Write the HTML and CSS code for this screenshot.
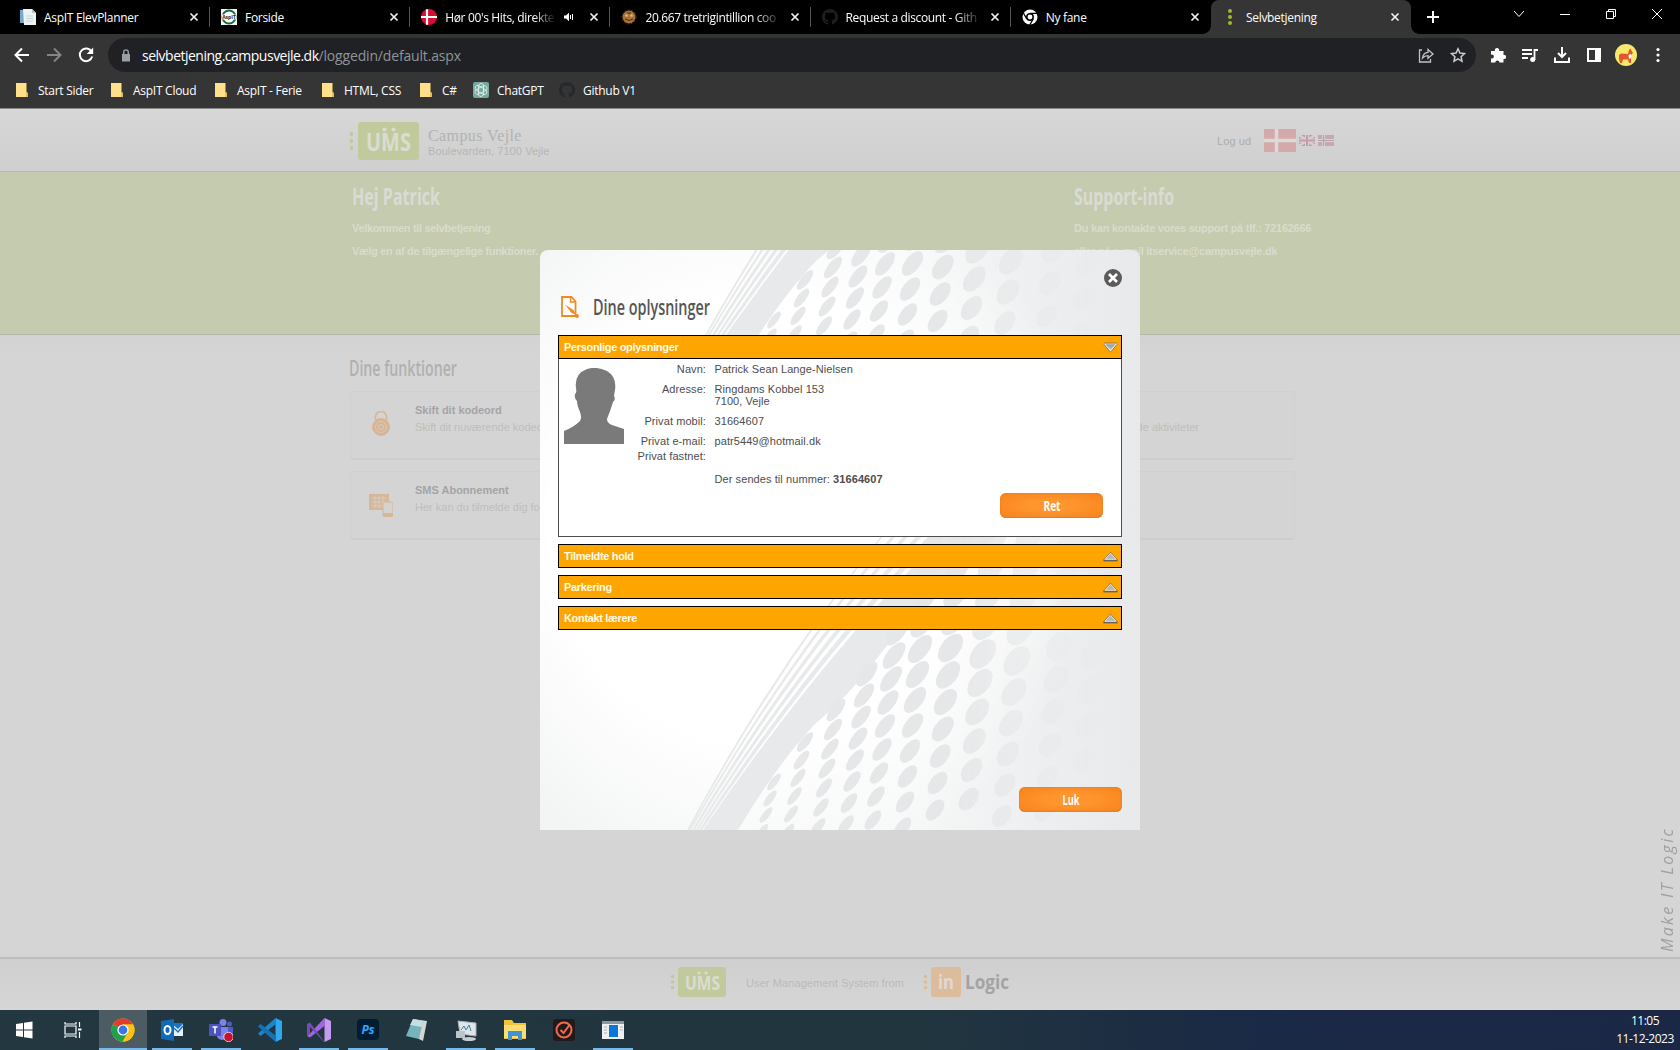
FILE: index.html
```html
<!DOCTYPE html>
<html lang="da">
<head>
<meta charset="utf-8">
<title>Selvbetjening</title>
<link rel="stylesheet" href="styles.css">
</head>
<body>
<svg class="defs" width="0" height="0">
  <defs>
    <symbol id="x" viewBox="0 0 10 10"><path d="M1.5 1.5l7 7M8.500 1.500l-7 7" stroke="#f1f1f1" stroke-width="1.700" fill="none"/></symbol>
    <symbol id="folder" viewBox="0 0 12 14"><path d="M0 0h10.500v9L12 10v4H0z" fill="#ffe08a"/><path d="M10 9l2 1v4h-2z" fill="#e9bd55"/></symbol>
    <symbol id="github" viewBox="0 0 16 16"><path d="M8 0C3.580 0 0 3.580 0 8c0 3.540 2.290 6.530 5.470 7.590.4.070.55-.17.55-.38v-1.490c-2.010.37-2.690-.94-2.690-.94-.36-.92-.88-1.200-.88-1.200-.72-.5.060-.48.060-.48.8.060 1.220.83 1.220.83.7 1.210 1.870.87 2.330.66.070-.52.280-.87.5-1.070-1.780-.2-3.640-.89-3.640-3.950 0-.87.310-1.590.82-2.150-.08-.2-.36-1.020.080-2.120 0 0 .67-.21 2.200.82a7.600 7.600 0 0 1 4 0c1.530-1.040 2.200-.82 2.200-.82.440 1.100.160 1.920.080 2.120.510.56.82 1.270.82 2.150 0 3.070-1.870 3.750-3.650 3.950.290.25.540.73.540 1.480v2.200c0 .21.150.46.550.38A8 8 0 0 0 8 0z"/></symbol>
    <symbol id="dots" viewBox="0 0 6 20"><circle cx="3" cy="3" r="2.200"/><circle cx="3" cy="10" r="2.200"/><circle cx="3" cy="17" r="2.200"/></symbol>
    <linearGradient id="arrow" x1="0" y1="0" x2="0" y2="1"><stop offset="0" stop-color="#8a93a0"/><stop offset="1" stop-color="#d9d9d9"/></linearGradient>
    <symbol id="up" viewBox="0 0 16 11"><path d="M8 1.500L14.500 8.500H1.500z" fill="#b2b9be"/><path d="M.5 9.300L8 1l7.500 8.300z" stroke="#75695a" stroke-width=".8" fill="none"/><path d="M2 8.500L8 2l6 6.500z" stroke="#f4f1e8" stroke-width=".8" fill="none"/><path d="M.5 10h15" stroke="#5f5f5f" stroke-width="1.400"/></symbol>
    <symbol id="down" viewBox="0 0 16 11"><path d="M1.500 1.500h13L8 9.500z" fill="url(#arrow)" stroke="#fff" stroke-width="1.200"/><path d="M.5 .8h15M1 2l7 8.500L15 2" stroke="#70675a" stroke-width=".9" fill="none"/></symbol>
  </defs>
</svg>

<header class="chrome">
  <div class="tabs">
    <div class="tab"><svg class="fav" viewBox="0 0 16 16"><path d="M0 1h9v13H0z" fill="#74a9cf"/><path d="M3 0h9l4 4v12H4z" fill="#eef2f3"/><path d="M12 0v4h4" fill="#b9c4c9"/><path d="M6 7h7M6 9.500h7M6 12h7" stroke="#c8d0d4"/></svg><span class="label">AspIT ElevPlanner</span><svg class="close"><use href="#x"/></svg></div>
    <div class="tab"><svg class="fav" viewBox="0 0 16 16"><path d="M0 0h16v16H0z" fill="#f3f6f4"/><circle cx="8" cy="8" r="6.500" fill="#fff" stroke="#176b43" stroke-width="2"/><path d="M1 5.500h14v5H1z" fill="#fff"/><text x="8" y="9.700" font-size="5" font-weight="700" text-anchor="middle" fill="#222">AspIT</text></svg><span class="label">Forside</span><svg class="close"><use href="#x"/></svg></div>
    <div class="tab"><svg class="fav" viewBox="0 0 16 16"><circle cx="8" cy="8" r="8" fill="#d80c35"/><path d="M6 .3v15.400M0 8h16" stroke="#fff" stroke-width="2.200"/></svg><span class="label fade">Hør 00's Hits, direkte</span><svg class="audio" viewBox="0 0 10 10"><path d="M0 3.500h2L5 .8v8.400L2 6.500H0z" fill="#fff"/><path d="M6.500 3v4M8.500 2v6" stroke="#fff" stroke-width="1"/></svg><svg class="close"><use href="#x"/></svg></div>
    <div class="tab"><svg class="fav" viewBox="0 0 16 16"><circle cx="8" cy="8" r="6.500" fill="#a8743d"/><circle cx="8" cy="8" r="7" fill="none" stroke="#5b3a1c" stroke-dasharray="2 1.500"/><circle cx="5.500" cy="6.500" r="1.300" fill="#e4b778"/><circle cx="10.500" cy="6.500" r="1.300" fill="#e4b778"/><path d="M4 10q4 3 8 0M6 4h4" stroke="#4b2c12" fill="none"/></svg><span class="label fade">20.667 tretrigintillion coo</span><svg class="close"><use href="#x"/></svg></div>
    <div class="tab"><svg class="fav dim"><use href="#github"/></svg><span class="label fade">Request a discount - Gith</span><svg class="close"><use href="#x"/></svg></div>
    <div class="tab last"><svg class="fav" viewBox="0 0 16 16"><circle cx="8" cy="8" r="7.500" fill="#fff"/><circle cx="8" cy="8" r="3.200" fill="#fff" stroke="#000" stroke-width="1.500"/><path d="M8 4.300h7M4.800 10L1.400 4M11.200 10l-3.500 6" stroke="#000" stroke-width="1.300"/></svg><span class="label">Ny fane</span><svg class="close"><use href="#x"/></svg></div>
    <div class="tab active"><svg class="fav" viewBox="0 0 16 16"><g fill="#9bbb2f"><circle cx="8" cy="2" r="2"/><circle cx="8" cy="8" r="2"/><circle cx="8" cy="14" r="2"/></g></svg><span class="label">Selvbetjening</span><svg class="close"><use href="#x"/></svg></div>
    <svg class="plus" viewBox="0 0 12 12"><path d="M6 0v12M0 6h12" stroke="#fff" stroke-width="2"/></svg>
    <div class="win">
      <svg viewBox="0 0 10 10"><path d="M0 2l5 5.500L10 2" /></svg>
      <svg viewBox="0 0 10 10"><path d="M0 5.500h10"/></svg>
      <svg viewBox="0 0 10 10"><path d="M.5 2.500h7v7h-7zM2.500 2.500v-2h7v7h-2"/></svg>
      <svg viewBox="0 0 10 10"><path d="M0 0l10 10M10 0L0 10"/></svg>
    </div>
  </div>
  <div class="toolbar">
    <svg class="nav" viewBox="0 0 16 16"><path d="M15 8H2M8 1.500L1.500 8 8 14.500" stroke="#fff" stroke-width="2" fill="none"/></svg>
    <svg class="nav" viewBox="0 0 16 16"><path d="M1 8h13M8 1.500L14.500 8 8 14.500" stroke="#858585" stroke-width="2" fill="none"/></svg>
    <svg class="nav" viewBox="0 0 16 16"><path d="M13.500 4.500A6.300 6.300 0 1 0 14.200 9.500" stroke="#fff" stroke-width="2" fill="none"/><path d="M15.200.5v6.500H8.700z" fill="#fff"/></svg>
    <div class="url">
      <svg class="lock" viewBox="0 0 10 13"><path d="M1 5h8v7.500H1z" fill="#9aa0a6"/><path d="M2.700 5V3.200a2.300 2.300 0 0 1 4.600 0V5" stroke="#9aa0a6" stroke-width="1.400" fill="none"/></svg>
      <span class="host">selvbetjening.campusvejle.dk</span><span class="path">/loggedin/default.aspx</span>
      <svg class="uicon share" viewBox="0 0 16 16" fill="none" stroke="#bfc3c7" stroke-width="1.300"><path d="M4 3H1.500v12h11v-3"/><path d="M4.500 11c.5-4 2.500-5.500 5.500-5.700V2.500l5 4.500-5 4.300V8.700C7.500 8.700 6 9.200 4.500 11z"/></svg>
      <svg class="uicon" viewBox="0 0 16 16" fill="none" stroke="#c8ccd0" stroke-width="1.500"><path d="M8 1.800l1.900 4.300 4.600.5-3.400 3.100.9 4.600L8 11.900l-4 2.400.9-4.600L1.500 6.600l4.600-.5z"/></svg>
    </div>
    <div class="actions">
      <svg viewBox="0 0 16 16"><path fill="#fff" d="M1 4h4a2.200 2.200 0 1 1 4 0h4.500v4a2.100 2.100 0 1 1 0 4v3.500H9.500a2.100 2.100 0 1 0-4.200 0H1v-4.200a2 2 0 1 0 0-3.600z"/></svg>
      <svg viewBox="0 0 16 16"><path d="M0 3h10M0 7h10M0 11h6M12.500 13V3h3.500" stroke="#fff" stroke-width="1.800" fill="none"/><circle cx="10.700" cy="12.500" r="2.500" fill="#fff"/></svg>
      <svg viewBox="0 0 16 16"><path d="M8 0v9M4 6l4 4 4-4M1 10.500V15h14v-4.500" stroke="#fff" stroke-width="2" fill="none"/></svg>
      <svg viewBox="0 0 16 16"><path d="M2 2h12v12H2z" fill="none" stroke="#fff" stroke-width="2"/><path d="M9 2h5v12H9z" fill="#fff"/></svg>
      <svg class="avatar" viewBox="0 0 22 22"><circle cx="11" cy="11" r="11" fill="#f7e96b"/><path d="M4 11l2-1.500 7 .5 1-4 1.500-1.500L16 6l2 3-2 2v8h-2l-1-3.500H8L7 19H5l-1-4z" fill="#e4572e"/><path d="M13.500 11l2.500-1v4l-2 1z" fill="#fff"/></svg>
      <svg viewBox="0 0 16 16" fill="#fff"><circle cx="8" cy="2.500" r="1.600"/><circle cx="8" cy="8" r="1.600"/><circle cx="8" cy="13.500" r="1.600"/></svg>
    </div>
  </div>
  <nav class="bookmarks">
    <a class="b1"><svg><use href="#folder"/></svg><span>Start Sider</span></a>
    <a class="b2"><svg><use href="#folder"/></svg><span>AspIT Cloud</span></a>
    <a class="b3"><svg><use href="#folder"/></svg><span>AspIT - Ferie</span></a>
    <a class="b4"><svg><use href="#folder"/></svg><span>HTML, CSS</span></a>
    <a class="b5"><svg><use href="#folder"/></svg><span>C#</span></a>
    <a class="b6"><svg class="wide" viewBox="0 0 16 16"><rect width="16" height="16" rx="2" fill="#74a99c"/><g fill="none" stroke="#e8f4f1" stroke-width=".8"><path id="petal" d="M8 5.200l2.500-1.400a2.600 2.600 0 0 1 3 4L8 11"/><use href="#petal" transform="rotate(60 8 8)"/><use href="#petal" transform="rotate(120 8 8)"/><use href="#petal" transform="rotate(180 8 8)"/><use href="#petal" transform="rotate(240 8 8)"/><use href="#petal" transform="rotate(300 8 8)"/></g></svg><span>ChatGPT</span></a>
    <a class="b7"><svg class="wide gh"><use href="#github"/></svg><span>Github V1</span></a>
  </nav>
</header>

<main class="page">
  <div class="masthead">
    <svg class="logo" width="70" height="38" viewBox="0 0 70 38"><g fill="#c1ca9d"><use href="#dots" x="-2" y="9" width="6" height="20"/><rect x="8" width="61" height="38" rx="3"/></g><text class="cond" x="16" y="28.500" font-size="25" textLength="45" lengthAdjust="spacingAndGlyphs" fill="#dadcd1">UMS</text><g fill="#dadcd1"><circle cx="34.500" cy="7.500" r="2"/><circle cx="43.500" cy="7.500" r="2"/></g></svg>
    <div class="school"><div class="name">Campus Vejle</div><div class="addr">Boulevarden, 7100 Vejle</div></div>
    <span class="logout">Log ud</span>
    <svg class="flags" width="72" height="24" viewBox="0 0 72 24"><path d="M0 0h32v23H0z" fill="#d4a9aa"/><path d="M12.500 0v23M0 11.500h32" stroke="#dadada" stroke-width="3.500"/><path d="M35 6h16v11H35z" fill="#a7a8b6"/><path d="M35 6l16 11M51 6L35 17" stroke="#d8d0d2" stroke-width="2.500"/><path d="M43 6v11M35 11.500h16" stroke="#d8d0d2" stroke-width="4"/><path d="M43 6v11M35 11.500h16" stroke="#c79da4" stroke-width="2"/><path d="M54 6h16v11H54z" fill="#cfa5aa"/><path d="M59.500 6v11M54 11.500h16" stroke="#d8d3d5" stroke-width="3"/><path d="M59.500 6v11M54 11.500h16" stroke="#a6a6b8" stroke-width="1.200"/></svg>
  </div>
  <section class="hero">
    <div class="greet">
      <svg class="h" width="110" height="28"><text class="cond" x="0" y="20" font-size="22.500" textLength="88" lengthAdjust="spacingAndGlyphs">Hej Patrick</text></svg>
      <p class="p1">Velkommen til selvbetjening</p><p class="p2">Vælg en af de tilgængelige funktioner.</p>
    </div>
    <div class="support">
      <svg class="h" width="120" height="28"><text class="cond" x="0" y="20" font-size="22.500" textLength="100" lengthAdjust="spacingAndGlyphs">Support-info</text></svg>
      <p class="p1">Du kan kontakte vores support på tlf.: 72162666</p><p class="p2">eller på e-mail itservice@campusvejle.dk</p>
    </div>
  </section>
  <section class="functions">
    <svg class="fh" width="120" height="28"><text class="cond semi" x="0" y="20" font-size="21.500" textLength="108" lengthAdjust="spacingAndGlyphs">Dine funktioner</text></svg>
    <div class="card">
      <svg width="24" height="26" viewBox="0 0 24 26" fill="none" stroke="#d8b797"><path d="M6.500 9V6a5.500 5.500 0 0 1 11 0v3" stroke-width="1.600"/><circle cx="12" cy="16" r="8.500" fill="#d7b592"/><g stroke="#d6ccc2"><circle cx="12" cy="16" r="5.500"/><circle cx="12" cy="16" r="2.500"/></g></svg>
      <div><h3>Skift dit kodeord</h3><p>Skift dit nuværende kodeord</p></div><p class="right">Se dine kommende aktiviteter</p>
    </div>
    <div class="card">
      <svg width="24" height="26" viewBox="0 0 24 26"><path d="M0 3h20v16H0z" fill="#d8b796"/><path d="M3 7h14M3 11h14M3 15h14M6 5v12M10 5v12M14 5v12" stroke="#d6cdc4"/><rect x="14" y="11" width="10" height="14.500" rx="1.500" fill="#d5d3d1" stroke="#d6b595"/><path d="M14 22h10v3H14z" fill="#d8b796"/></svg>
      <div><h3>SMS Abonnement</h3><p>Her kan du tilmelde dig for</p></div>
    </div>
  </section>
  <div class="slogan">Make IT Logic</div>
  <footer class="foot">
    <svg width="57" height="30" viewBox="0 0 57 30"><g fill="#c1ca9d"><use href="#dots" x="0" y="7" width="5" height="16"/><rect x="8" width="48" height="30" rx="3"/></g><text class="cond" x="15" y="23" font-size="20" textLength="35" lengthAdjust="spacingAndGlyphs" fill="#dadcd1">UMS</text><g fill="#dadcd1"><circle cx="29" cy="6" r="1.600"/><circle cx="36" cy="6" r="1.600"/></g></svg>
    <span>User Management System from</span>
    <svg width="90" height="30" viewBox="0 0 90 30"><g fill="#dbbd9b"><use href="#dots" x="0" y="7" width="5" height="16"/><rect x="8" width="30" height="30" rx="3"/></g><text class="cond" x="15" y="22" font-size="20" textLength="16" lengthAdjust="spacingAndGlyphs" fill="#dfdad3">in</text><text class="cond" x="42" y="22" font-size="20" textLength="44" lengthAdjust="spacingAndGlyphs" fill="#a3a3a3">Logic</text></svg>
  </footer>

  <div class="modal">
    <svg class="art" width="600" height="580" viewBox="0 0 600 580">
      <defs>
        <linearGradient id="fade"><stop offset="0" stop-color="#fff"/><stop offset=".6" stop-color="#fff"/><stop offset=".95" stop-color="#000"/></linearGradient>
        <mask id="m" maskUnits="userSpaceOnUse" x="140" y="260" width="460" height="330"><path d="M140 260h460v330H140z" fill="url(#fade)"/></mask>
        <clipPath id="topclip"><path d="M0 0h600v200H0z"/></clipPath>
        <clipPath id="botclip"><path d="M0 280h600v300H0z"/></clipPath>
        <g id="motif">
          <path fill="#e8e9ea" d="M147 580Q235 415 346 280l2 0Q238 415 149 580zM149 580Q242 415 357 280l4 0Q245 415 151 580zM152 580Q249 415 369 280l5 0Q253 415 155 580zM156 580Q257 415 382 280l6 0Q262 415 158 580zM159 580Q266 415 395 280l7 0Q272 415 162 580zM163 580Q275 415 408 280h56Q370 365 338 407T276 473Q240 510 198 580z"/>
          <g id="holes" mask="url(#m)" fill="#e6e7e8"></g>
        </g>
      </defs>
      <g clip-path="url(#botclip)"><use href="#motif"/></g>
      <g clip-path="url(#topclip)"><use href="#motif" y="-462"/></g>
    </svg>
    <div class="mhead">
      <svg width="18" height="22" viewBox="0 0 18 22"><path d="M1 1h9.500l4 4.500V20H1z" fill="#fff" stroke="#f08a24" stroke-width="1.800"/><path d="M9.500 1v5h5" fill="none" stroke="#f08a24" stroke-width="1.500"/><path d="M4 8.500l9 6 1.500 4-4-1.500z" fill="#f08a24"/><circle cx="16" cy="20" r="1.900" fill="#f08a24"/></svg>
      <svg width="130" height="30"><text class="cond semi" x="0" y="21" font-size="21.500" textLength="117" lengthAdjust="spacingAndGlyphs" fill="#555">Dine oplysninger</text></svg>
    </div>
    <svg class="dismiss" viewBox="0 0 18 18"><circle cx="9" cy="9" r="9" fill="#5b5b5b"/><path d="M5 5l8 8M13 5l-8 8" stroke="#fff" stroke-width="2.700"/></svg>
    <div class="bar first"><span>Personlige oplysninger</span><svg><use href="#down"/></svg></div>
    <div class="info">
      <svg class="photo" viewBox="0 0 60 76"><path fill="#7a7a7a" d="M0 76V63Q10 59 16 53Q18 50 16 44Q13 37 13 33Q10 30 11 26Q13 25 12 20Q10 6 23 1Q32-2 43 3Q53 9 51 22L50 28Q52 31 49 34Q46 44 43 51Q43 55 48 57L60 61V76z"/></svg>
      <dl>
        <dt>Navn:</dt><dd>Patrick Sean Lange-Nielsen</dd>
        <dt>Adresse:</dt><dd>Ringdams Kobbel 153<br>7100, Vejle</dd>
        <dt>Privat mobil:</dt><dd>31664607</dd>
        <dt class="tight">Privat e-mail:</dt><dd class="tight">patr5449@hotmail.dk</dd>
        <dt class="wide">Privat fastnet:</dt><dd class="wide"></dd>
        <dt></dt><dd>Der sendes til nummer: <b>31664607</b></dd>
      </dl>
      <button class="btn ret"><svg width="20" height="22"><text class="cond" x="1.500" y="15.500" font-size="14.500" textLength="17" lengthAdjust="spacingAndGlyphs" fill="#fff">Ret</text></svg></button>
    </div>
    <div class="bar"><span>Tilmeldte hold</span><svg><use href="#up"/></svg></div>
    <div class="bar"><span>Parkering</span><svg><use href="#up"/></svg></div>
    <div class="bar"><span>Kontakt lærere</span><svg><use href="#up"/></svg></div>
    <button class="btn luk"><svg width="20" height="22"><text class="cond" x="1.500" y="15.500" font-size="14.500" textLength="17" lengthAdjust="spacingAndGlyphs" fill="#fff">Luk</text></svg></button>
  </div>
</main>

<div class="taskbar">
  <i class="start"><svg viewBox="0 0 24 24"><path fill="#fff" d="M4 6l7-1v6.500H4zM12 4.800L20.500 3.500v8H12zM4 12.500h7V19l-7-1zM12 12.500h8.500v8L12 19.200z"/></svg></i>
  <i class="view"><svg viewBox="0 0 24 24" fill="none" stroke="#fff" stroke-width="1.200"><path d="M4 8h11v8H4zM4 4v2h11V4M4 20v-2h11v2M18.500 4v5M18.500 14v6"/><path d="M17 11.500h3.500" stroke-width="2"/></svg></i>
  <i class="run cur"><svg viewBox="0 0 24 24"><circle cx="12" cy="12" r="11.500" fill="#fbc116"/><path d="M12 12L2 6.200A11.500 11.500 0 0 1 22 6.200z" fill="#e33b2e"/><path d="M12 12L2 6.200A11.500 11.500 0 0 0 11.500 23.500l5.200-8.500z" fill="#1fa04c"/><path d="M22 6.300H12V12l4.700 3-5 8.500A11.500 11.500 0 0 0 22 6.300z" fill="#fbc116"/><circle cx="12" cy="12" r="5.600" fill="#fff"/><circle cx="12" cy="12" r="4.400" fill="#3577e5"/></svg></i>
  <i class="run"><svg viewBox="0 0 24 24"><path d="M12 6h11v12H12z" fill="#e8f1fa"/><path d="M12 6l6 5 5-5v-1H12z" fill="#1c74c4"/><path d="M14 10l4 4 5-6" stroke="#1c74c4" stroke-width="1.500" fill="none"/><path d="M1 3l13-2v22L1 21z" fill="#0f6ab8"/><ellipse cx="7.500" cy="12" rx="3" ry="4" fill="none" stroke="#fff" stroke-width="2"/></svg></i>
  <i class="run"><svg viewBox="0 0 24 24"><circle cx="14" cy="4.500" r="3.500" fill="#7b83eb"/><circle cx="20.500" cy="6" r="2.500" fill="#5059c9"/><path d="M16 9h8v7a4 4 0 0 1-6 3z" fill="#5059c9"/><path d="M8 9h11v8a6 6 0 0 1-11 2z" fill="#7b83eb"/><path d="M0 6h12v12H0z" fill="#4b53bc"/><path d="M3.500 9h5M6 9v6.500" stroke="#fff" stroke-width="1.500"/><circle cx="19.500" cy="19" r="4.700" fill="#c4122f" stroke="#fff" stroke-width=".7"/></svg></i>
  <i><svg viewBox="0 0 24 24"><path d="M17.500 0v24L24 21V3z" fill="#2fa8ee"/><path d="M17.500 0L0 15.500 2.500 18 18 6z" fill="#1c86cc"/><path d="M17.500 24L0 8.500 2.500 6 18 18z" fill="#1473b7"/></svg></i>
  <i class="run"><svg viewBox="0 0 24 24"><path d="M17.500 0v24L24 21V3z" fill="#c39bf0"/><path d="M17.500 0L2 16.500 0 18l3 1.500L18 7.500z" fill="#a267dd"/><path d="M17.500 24L3 4.500 0 6v12l3-2V9l14 15z" fill="#7a4bb5"/></svg></i>
  <i class="run"><svg viewBox="0 0 24 24"><rect x="1" y="1" width="22" height="21" rx="4" fill="#001d33"/><text x="12" y="16" font-size="12" font-weight="700" text-anchor="middle" fill="#31a8ff" font-family="Open Sans">Ps</text></svg></i>
  <i><svg viewBox="0 0 24 24"><path d="M8 1l14 2-4 20-4-2z" fill="#d6d7d2"/><path d="M8 1l10 2-4 18L1 18z" fill="#76b4bd"/><path d="M8 1l10 2-1.500 6L5 7z" fill="#c6dfe2"/></svg></i>
  <i class="run"><svg viewBox="0 0 24 24"><path d="M4 3l18 2v13L6 16z" fill="#dfe5e8" stroke="#a6afb4"/><path d="M7 12l3-4 2 4 3-5 2 6" stroke="#3a82a2" fill="none"/><path d="M2 13h9v7H2z" fill="#bcc4c8"/><ellipse cx="15" cy="21" rx="7" ry="2" fill="#c8cdd0"/></svg></i>
  <i class="run"><svg viewBox="0 0 24 24"><path d="M1 2h8l2 3h12v16H1z" fill="#f3c13b"/><path d="M1 7h22v13H1z" fill="#fcdc75"/><path d="M5 22v-9h14v9h-4v-4H9v4z" fill="#3e95d4"/></svg></i>
  <i><svg viewBox="0 0 24 24"><rect x="1" y="1" width="22" height="22" rx="3" fill="#211a1a"/><circle cx="12" cy="12" r="7.500" fill="none" stroke="#f26b4e" stroke-width="2"/><path d="M8.500 12l3 3 6-8" fill="none" stroke="#f26b4e" stroke-width="2"/></svg></i>
  <i class="run"><svg viewBox="0 0 24 24"><path d="M1 3h22v18H1z" fill="#eef0f1"/><path d="M1 3h22v3H1z" fill="#8d989d"/><path d="M8 7h9v12H8z" fill="#0b78d7"/><path d="M3 9h3M3 12h3M3 15h3M19 9h3M19 12h3" stroke="#a9b2b6"/></svg></i>
  <div class="clock"><div>11:05</div><div>11-12-2023</div></div>
</div>
<script src="holes.js"></script>
</body>
</html>
```
FILE: holes.js
```js
// Columns of the perforated dialog backdrop:
// [x at top, first y, x drift per hole, y step, count, long radius, short radius]
const columns = [
  [562, 300, -3, 35, 8, 16, 11],
  [528, 297, -3, 33, 9, 16, 11],
  [489, 287, -3, 31, 10, 17, 11],
  [454, 288, -2.8, 29, 10, 17, 10.5],
  [421, 290, -2.6, 27, 11, 16.5, 9.5],
  [390, 297, -2.5, 25.5, 12, 16.5, 8.5],
  [357, 382, -3, 23.5, 9, 16, 7.5],
  [327, 424, -3, 21.5, 8, 15.5, 6.8],
  [296, 460, -3, 19.5, 7, 15, 6],
  [265, 492, -3.5, 18, 6, 14, 5.2],
  [234, 532, -4, 16.5, 4, 13, 4.6]
];
const holes = document.getElementById('holes');
for (const [x, y, dx, dy, count, long, short] of columns) {
  for (let i = 0; i < count; i++) {
    const cx = x + dx * i, cy = y + dy * i;
    const scale = 1 - Math.max(0, cy - 400) / 620;
    const hole = document.createElementNS('http://www.w3.org/2000/svg', 'ellipse');
    hole.setAttribute('rx', short * scale);
    hole.setAttribute('ry', long * scale);
    hole.setAttribute('transform', `translate(${cx} ${cy}) rotate(38)`);
    holes.appendChild(hole);
  }
}
```
FILE: styles.css
```css
* { box-sizing: border-box; }
body { margin: 0; width: 1680px; height: 1050px; overflow: hidden; background: #d5d5d5; font-family: "Liberation Sans", Arial, sans-serif; font-size: 11px; }
p, h3, dl, dd { margin: 0; }
svg { display: block; flex: none; }
.defs { position: absolute; }
.cond { font-family: "Open Sans", sans-serif; font-weight: 700; }
.semi { font-weight: 600; }

/* browser frame */
.chrome { height: 109px; background: #353535; color: #fff; border-bottom: 1px solid #8a8a8a; font-family: "Open Sans", "Noto Sans", sans-serif; font-size: 12px; }
.tabs { display: flex; height: 34px; background: #000; padding-left: 9px; align-items: center; }
.tab { width: 200.200px; height: 34px; display: flex; align-items: center; padding: 0 11px; background: linear-gradient(#555, #555) right 7px / 1px 20px no-repeat; }
.tab:nth-child(1) { width: 201px; }
.tab.last { background: none; }
.tab.active { background: #353535; border-radius: 8px 8px 0 0; position: relative; }
.tab.active::before, .tab.active::after { content: ""; position: absolute; bottom: 0; width: 8px; height: 8px; left: -8px; background: radial-gradient(circle at 0 0, #000 7.500px, #353535 8px); }
.tab.active::after { left: auto; right: -8px; background: radial-gradient(circle at 100% 0, #000 7.500px, #353535 8px); }
.fav { width: 16px; height: 16px; margin-right: 8px; }
.dim { fill: #1c1f22; }
.gh { fill: #24292e; }
.label { flex: 1; min-width: 0; overflow: hidden; white-space: nowrap; letter-spacing: -.3px; }
.fade { margin-right: 8px; -webkit-mask-image: linear-gradient(90deg, #000 80%, transparent); mask-image: linear-gradient(90deg, #000 80%, transparent); letter-spacing: -.35px; }
.close { width: 10px; height: 10px; }
.audio { width: 10px; height: 10px; margin-right: 15px; }
.plus { width: 12px; height: 12px; margin-left: 16px; }
.win { display: flex; gap: 36px; margin-left: 75px; margin-top: -6px; }
.win svg { width: 10px; height: 10px; fill: none; stroke: #fff; stroke-width: 1; }
.toolbar { display: flex; align-items: center; height: 42px; padding-left: 14px; }
.nav { width: 16px; height: 16px; margin-right: 16px; }
.url { width: 1368px; height: 34px; border-radius: 17px; background: #202124; margin-left: -2px; display: flex; align-items: center; padding: 0 10px 0 13px; font-size: 14px; }
.lock { width: 10px; height: 13px; margin-right: 11px; }
.host { letter-spacing: -.5px; }
.path { color: #8f9499; letter-spacing: -.17px; }
.uicon { width: 16px; height: 16px; }
.share { margin-left: auto; margin-right: 16px; }
.actions { display: flex; align-items: center; gap: 16px; margin-left: 14px; }
.actions svg { width: 16px; height: 16px; }
.actions .avatar { width: 22px; height: 22px; margin: 0 -3px; }
.bookmarks { display: flex; padding: 6px 0 0 16px; }
.bookmarks a { display: flex; align-items: center; height: 16px; letter-spacing: -.27px; white-space: nowrap; }
.bookmarks svg { width: 12px; height: 14px; margin-right: 10px; }
.bookmarks .wide { width: 16px; height: 16px; margin-right: 8px; }
.b1 { width: 95px; } .b2 { width: 104px; } .b3 { width: 107px; } .b4 { width: 98px; } .b5 { width: 53px; } .b6 { width: 86px; }

/* faded portal page */
.page { height: 901px; position: relative; display: flex; flex-direction: column; }
.masthead { height: 63px; flex: none; display: flex; background: linear-gradient(#d7d7d7, #cfcfcf); border-bottom: 1px solid #b9b9b3; padding: 13px 0 0 350px; }
.school { margin-left: 8px; width: 789px; color: #b2b2b2; padding-top: 4px; }
.name { font: 16px/19px "Liberation Serif", serif; letter-spacing: .4px; }
.addr { line-height: 13px; letter-spacing: .1px; color: #b6b6b6; }
.logout { width: 47px; color: #adadad; margin-top: 13px; line-height: 13px; letter-spacing: .1px; }
.flags { margin-top: 7px; }
.hero { height: 163px; flex: none; background: #c5cbae; border-bottom: 1px solid #b5b7aa; display: flex; padding: 13px 0 0 352px; color: #d9dccc; font-weight: 700; }
.greet { width: 722px; }
.h { fill: #dadbd4; }
.hero p { line-height: 13px; letter-spacing: -.26px; margin-bottom: 10px; }
.hero .greet p { letter-spacing: -.33px; }
.hero p.p1 { margin-top: 9px; }
.functions { padding: 21px 0 0 349px; flex: 1; background: linear-gradient(#d2d2d2, #d5d5d5 20px); }
.fh { fill: #b0b0b0; }
.card { width: 945px; height: 69px; margin: 0 0 11px 1px; border: 1px solid #d0d0d0; border-bottom: 2px solid #cdcdcd; border-radius: 4px; display: flex; padding: 12px 0 0 18px; background: #d4d4d4; }
.fh + .card { margin-top: 7px; }
.card svg { margin: 7px 22px 0 0; }
.card h3 { font: 700 11px/13px "Liberation Sans", sans-serif; color: #a4a4a7; letter-spacing: 0; }
.card p { line-height: 13px; margin-top: 4px; color: #bebebe; white-space: nowrap; }
.card .right { margin: 17px 95px 0 auto; }
.slogan { position: absolute; left: 1656px; top: 707px; width: 22px; height: 136px; writing-mode: vertical-rl; transform: rotate(180deg); font: italic 400 16px/22px "Open Sans", sans-serif; letter-spacing: 2.300px; white-space: nowrap; color: #9f9f9f; }
.foot { height: 53px; flex: none; margin-top: auto; border-top: 2px solid #bdbdbd; background: linear-gradient(#cfcfcf, #d6d6d6); display: flex; padding: 8px 0 0 670px; color: #bababa; }
.foot span { width: 157px; margin: 10px 20px 0 19px; line-height: 13px; letter-spacing: .1px; white-space: nowrap; }

/* dialog */
.modal { position: absolute; left: 540px; top: 141px; width: 600px; height: 580px; border-radius: 8px 8px 0 0; overflow: hidden; background: radial-gradient(ellipse 340px 370px at 215px 270px, #fff 60%, rgba(255,255,255,0)), linear-gradient(90deg, #f3f4f4, #f6f7f7 60%, #e8e9eb); padding: 0 18px; color: #4d4d4d; }
.art { position: absolute; left: 0; top: 0; }
.mhead { display: flex; gap: 14px; height: 85px; padding: 46px 0 0 3px; position: relative; }
.mhead svg + svg { margin-top: -2px; }
.dismiss { position: absolute; left: 564px; top: 19px; width: 18px; height: 18px; }
.bar { position: relative; height: 24px; margin-bottom: 7px; border: 1px solid #000; background: #ffa500; display: flex; justify-content: space-between; align-items: center; padding: 0 3px 0 5px; color: #fffbe6; font-weight: 700; letter-spacing: -.33px; }
.bar.first { margin: 0; }
.bar svg { width: 15px; height: 11px; }
.info { position: relative; height: 178px; margin-bottom: 7px; border: 1px solid #4d4d4d; border-top: 0; background: #fff; display: flex; }
.photo { width: 60px; height: 76px; margin: 9px 0 0 5px; }
dl { display: grid; grid-template-columns: 82px 260px; column-gap: 8.500px; align-content: start; padding-top: 4px; line-height: 12px; letter-spacing: .08px; }
dt { text-align: right; }
dt, dd { margin-bottom: 8px; min-height: 12px; }
dt.tight, dd.tight { margin-bottom: 3px; }
dt.wide, dd.wide { margin-bottom: 11px; }
.btn { flex: none; border: 0; padding: 0; width: 103px; height: 25px; border-radius: 6px; background: radial-gradient(ellipse at center, #ff952e 30%, #f8821b); box-shadow: inset 0 0 2px #e57a18, inset 0 -1px 1px #c98a55; display: flex; align-items: center; justify-content: center; }
.ret { margin: 134px 18px 0 auto; }
.luk { position: relative; margin: 157px 0 0 auto; }

/* desktop taskbar */
.taskbar { height: 40px; background: linear-gradient(90deg, #22373f 0%, #21353f 55%, #1a2945 75%, #1a2846); display: flex; }
.taskbar i { width: 49px; height: 40px; display: flex; align-items: center; justify-content: center; background: linear-gradient(#76b9ed, #76b9ed) 50% 100% / 0 2px no-repeat; }
.taskbar .start { width: 48px; } .taskbar .view { width: 50px; margin-right: 1px; }
.taskbar .run { background-size: 40px 2px; }
.taskbar .cur { width: 48px; background-color: #4d5c62; background-size: 48px 2px; }
.taskbar svg { width: 24px; height: 24px; }
.clock { margin-left: auto; width: 58px; margin-right: 6px; text-align: center; color: #fff; font: 12px/18px "Open Sans", sans-serif; letter-spacing: -.5px; padding-top: 2px; white-space: nowrap; }
```
